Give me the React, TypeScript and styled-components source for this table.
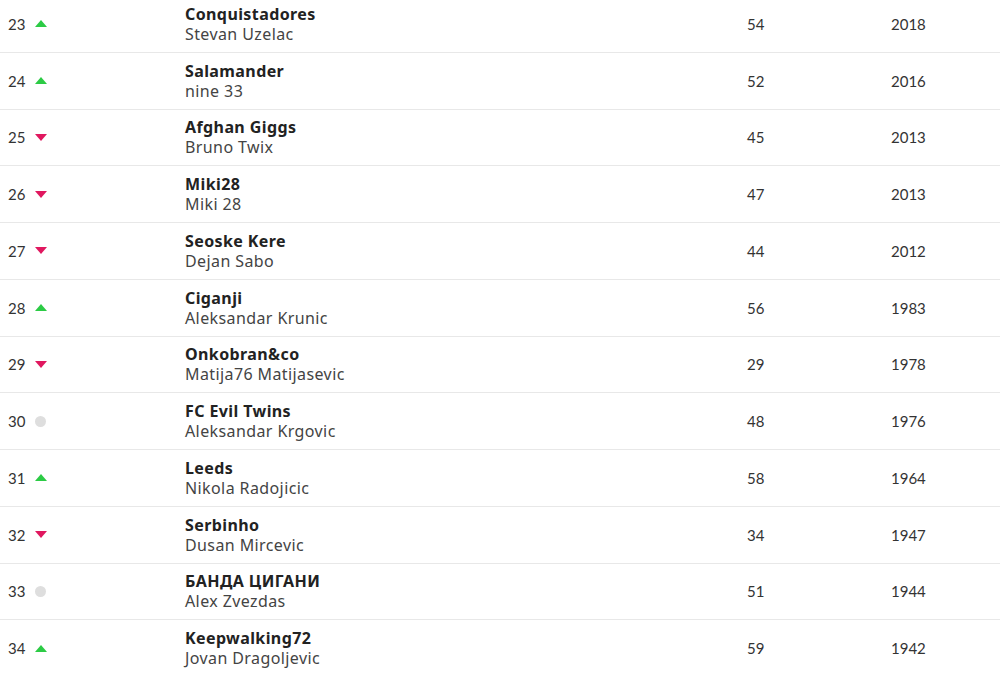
import React from "react";
import styled, { createGlobalStyle } from "styled-components";

const Global = createGlobalStyle`
  html, body { margin: 0; padding: 0; background: #fff; }
  body { overflow: hidden; }
`;

type Move = "up" | "down" | "same";
interface Entry { rank: number; move: Move; team: string; manager: string; gw: number; total: number; }

const data: Entry[] = [
  { rank: 23, move: "up", team: "Conquistadores", manager: "Stevan Uzelac", gw: 54, total: 2018 },
  { rank: 24, move: "up", team: "Salamander", manager: "nine 33", gw: 52, total: 2016 },
  { rank: 25, move: "down", team: "Afghan Giggs", manager: "Bruno Twix", gw: 45, total: 2013 },
  { rank: 26, move: "down", team: "Miki28", manager: "Miki 28", gw: 47, total: 2013 },
  { rank: 27, move: "down", team: "Seoske Kere", manager: "Dejan Sabo", gw: 44, total: 2012 },
  { rank: 28, move: "up", team: "Ciganji", manager: "Aleksandar Krunic", gw: 56, total: 1983 },
  { rank: 29, move: "down", team: "Onkobran&co", manager: "Matija76 Matijasevic", gw: 29, total: 1978 },
  { rank: 30, move: "same", team: "FC Evil Twins", manager: "Aleksandar Krgovic", gw: 48, total: 1976 },
  { rank: 31, move: "up", team: "Leeds", manager: "Nikola Radojicic", gw: 58, total: 1964 },
  { rank: 32, move: "down", team: "Serbinho", manager: "Dusan Mircevic", gw: 34, total: 1947 },
  { rank: 33, move: "same", team: "БАНДА ЦИГАНИ", manager: "Alex Zvezdas", gw: 51, total: 1944 },
  { rank: 34, move: "up", team: "Keepwalking72", manager: "Jovan Dragoljevic", gw: 59, total: 1942 },
];

const Table = styled.div`
  display: flex;
  flex-direction: column;
  margin-top: -4px;
  width: 1000px;
`;

const Row = styled.div`
  display: grid;
  grid-template-columns: 185px 562px 144px 1fr;
  align-items: center;
  height: 56.75px;
  box-sizing: border-box;
  border-bottom: 1px solid #e8e8e8;
`;

const RankCell = styled.div`
  display: flex;
  align-items: center;
  gap: 7px;
  padding-left: 8px;
  font-family: Lato, "Liberation Sans", sans-serif;
  font-size: 15px;
  color: #333;
`;

const Num = styled.span`
  display: inline-block;
  width: 20px;
`;

const Arrow = styled.span<{ $move: Move }>`
  display: inline-block;
  width: 0;
  height: 0;
  border-left: 6px solid transparent;
  border-right: 6px solid transparent;
  ${(p) =>
    p.$move === "up"
      ? "border-bottom: 7px solid #2ccb45;"
      : "border-top: 7px solid #e0185f;"}
`;

const Dot = styled.span`
  display: inline-block;
  width: 11px;
  height: 11px;
  border-radius: 50%;
  background: #dedede;
`;

const TeamCell = styled.div`
  display: flex;
  flex-direction: column;
  font-family: "Noto Sans", "Liberation Sans", sans-serif;
  font-size: 16px;
  letter-spacing: 0.4px;
  line-height: 20px;
`;

const TeamName = styled.span`
  font-weight: 700;
  color: #222;
`;

const Manager = styled.span`
  color: #444;
`;

const NumCell = styled.div`
  font-family: Lato, "Liberation Sans", sans-serif;
  font-size: 15px;
  color: #333;
`;

export default function App() {
  return (
    <>
      <Global />
      <Table>
        {data.map((e) => (
          <Row key={e.rank}>
            <RankCell>
              <Num>{e.rank}</Num>
              {e.move === "same" ? <Dot /> : <Arrow $move={e.move} />}
            </RankCell>
            <TeamCell>
              <TeamName>{e.team}</TeamName>
              <Manager>{e.manager}</Manager>
            </TeamCell>
            <NumCell>{e.gw}</NumCell>
            <NumCell>{e.total}</NumCell>
          </Row>
        ))}
      </Table>
    </>
  );
}
